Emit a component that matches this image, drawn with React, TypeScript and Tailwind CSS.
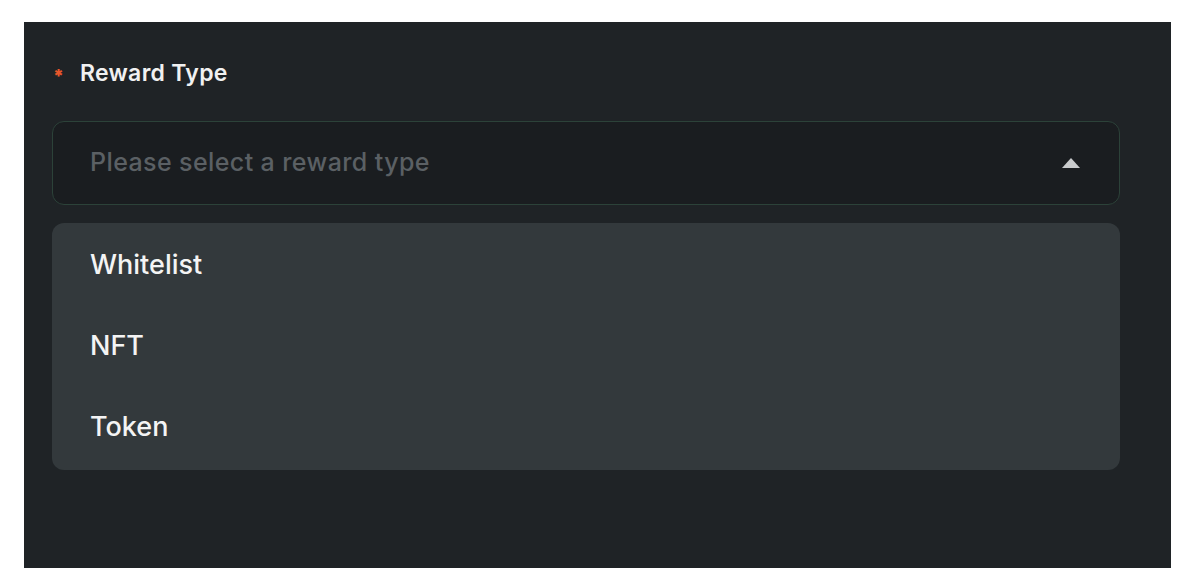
import React from "react";

const options = ["Whitelist", "NFT", "Token"];

const App = () => {
  return (
    <div className="h-[588px] w-[1196px] bg-white pl-[24px] pt-[22px] font-['Inter',sans-serif]">
      <div className="flex h-[546px] w-[1147px] flex-col bg-[#1f2326] pl-[28px] pr-[51px] pt-[35px]">
        <div className="flex h-[32px] items-center">
          <span className="ml-[1px] mt-[4px] w-[27px] text-[18px] font-black text-[#e8572b]">*</span>
          <span className="text-[23px] font-semibold tracking-[0.3px] text-[#f1f1f1]">Reward Type</span>
        </div>

        <div className="mt-[32px] flex h-[84px] items-center justify-between rounded-[12px] border border-[#2c4239] bg-[#1a1d20] pl-[37px] pr-[39px]">
          <span className="text-[25px] font-medium tracking-[0.4px] text-[#5b6064]">Please select a reward type</span>
          <svg width="18" height="10" viewBox="0 0 18 10">
            <path d="M9 0 L18 10 L0 10 Z" fill="#c9cbcc" />
          </svg>
        </div>

        <div className="mt-[18px] flex flex-col rounded-[12px] bg-[#33393c] py-[2px] pl-[38px]">
          {options.map((o) => (
            <div key={o} className="flex h-[81px] items-center text-[27px] font-medium text-[#f4f4f4]">
              {o}
            </div>
          ))}
        </div>
      </div>
    </div>
  );
};

export default App;
